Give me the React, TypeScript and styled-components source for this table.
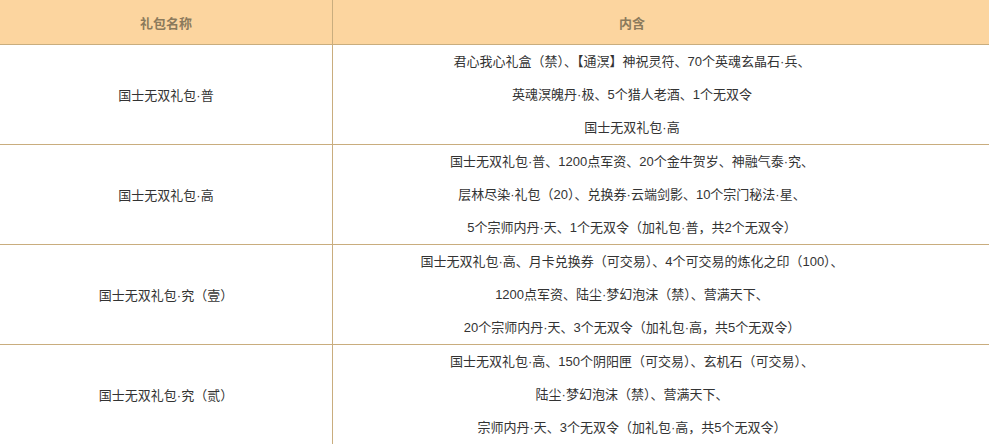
import React, { FC } from 'react';
import styled, { createGlobalStyle } from 'styled-components';

type PackRow = {
  name: string;
  lines: string[];
};

const rows: PackRow[] = [
  {
    name: '国士无双礼包·普',
    lines: ['君心我心礼盒（禁）、【通溟】神祝灵符、70个英魂玄晶石·兵、', '英魂溟魄丹·极、5个猎人老酒、1个无双令', '国士无双礼包·高'],
  },
  {
    name: '国士无双礼包·高',
    lines: [
      '国士无双礼包·普、1200点军资、20个金牛贺岁、神融气泰·究、',
      '层林尽染·礼包（20）、兑换券·云端剑影、10个宗门秘法·星、',
      '5个宗师内丹·天、1个无双令（加礼包·普，共2个无双令）',
    ],
  },
  {
    name: '国士无双礼包·究（壹）',
    lines: [
      '国士无双礼包·高、月卡兑换券（可交易）、4个可交易的炼化之印（100）、',
      '1200点军资、陆尘·梦幻泡沫（禁）、营满天下、',
      '20个宗师内丹·天、3个无双令（加礼包·高，共5个无双令）',
    ],
  },
  {
    name: '国士无双礼包·究（贰）',
    lines: [
      '国士无双礼包·高、150个阴阳匣（可交易）、玄机石（可交易）、',
      '陆尘·梦幻泡沫（禁）、营满天下、',
      '宗师内丹·天、3个无双令（加礼包·高，共5个无双令）',
    ],
  },
];

const GlobalStyle = createGlobalStyle`
  body {
    margin: 0;
    background: #ffffff;
    font-family: 'Liberation Sans', 'Noto Sans CJK SC', sans-serif;
  }
`;

const Table = styled.table`
  width: 989px;
  border-collapse: collapse;
  table-layout: fixed;
  font-size: 13px;
  color: #333333;
`;

const HeadCell = styled.th<{ $first?: boolean }>`
  height: 44px;
  padding: 0 ${(p) => (p.$first ? '0' : '58px')} 0 0;
  background: #fcd59f;
  color: #8b7a5c;
  font-weight: bold;
  text-align: center;
  border-bottom: 1px solid #c9ad7e;
  border-left: ${(p) => (p.$first ? 'none' : '1px solid #c9ad7e')};
  width: ${(p) => (p.$first ? '332px' : 'auto')};
`;

const Cell = styled.td<{ $first?: boolean }>`
  height: 99px;
  padding: 0 ${(p) => (p.$first ? '0' : '58px')} 0 0;
  text-align: center;
  vertical-align: middle;
  border-bottom: 1px solid #c9ad7e;
  border-left: ${(p) => (p.$first ? 'none' : '1px solid #c9ad7e')};
`;

const Line = styled.p`
  margin: 0;
  line-height: 33px;
  white-space: nowrap;
`;

const App: FC = () => {
  return (
    <>
      <GlobalStyle />
      <Table>
        <thead>
          <tr>
            <HeadCell $first>礼包名称</HeadCell>
            <HeadCell>内含</HeadCell>
          </tr>
        </thead>
        <tbody>
          {rows.map((row) => (
            <tr key={row.name}>
              <Cell $first>{row.name}</Cell>
              <Cell>
                {row.lines.map((line) => (
                  <Line key={line}>{line}</Line>
                ))}
              </Cell>
            </tr>
          ))}
        </tbody>
      </Table>
    </>
  );
};

export default App;
